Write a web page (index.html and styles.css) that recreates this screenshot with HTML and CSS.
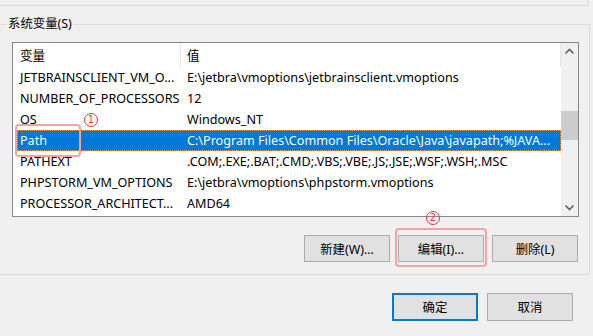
FILE: index.html
```html
<!DOCTYPE html>
<html lang="zh-CN">
<head>
    <meta charset="UTF-8">
    <title>系统变量</title>
    <link rel="stylesheet" href="styles.css">
</head>
<body>
    <div class="prev-group"></div>

    <fieldset class="group">
        <legend>系统变量(S)</legend>

        <div class="listview">
            <div class="list-main">
                <div class="list-header">
                    <div class="col-name">变量</div>
                    <div class="col-value">值</div>
                </div>
                <div class="row">
                    <div class="col-name">JETBRAINSCLIENT_VM_O...</div>
                    <div class="col-value">E:\jetbra\vmoptions\jetbrainsclient.vmoptions</div>
                </div>
                <div class="row">
                    <div class="col-name">NUMBER_OF_PROCESSORS</div>
                    <div class="col-value">12</div>
                </div>
                <div class="row">
                    <div class="col-name">OS</div>
                    <div class="col-value">Windows_NT</div>
                </div>
                <div class="row selected">
                    <div class="col-name">Path</div>
                    <div class="col-value">C:\Program Files\Common Files\Oracle\Java\javapath;%JAVA...</div>
                    <span class="mark mark-path"></span>
                    <span class="num num-one">1</span>
                </div>
                <div class="row">
                    <div class="col-name">PATHEXT</div>
                    <div class="col-value">.COM;.EXE;.BAT;.CMD;.VBS;.VBE;.JS;.JSE;.WSF;.WSH;.MSC</div>
                </div>
                <div class="row">
                    <div class="col-name">PHPSTORM_VM_OPTIONS</div>
                    <div class="col-value">E:\jetbra\vmoptions\phpstorm.vmoptions</div>
                </div>
                <div class="row">
                    <div class="col-name">PROCESSOR_ARCHITECT...</div>
                    <div class="col-value">AMD64</div>
                </div>
            </div>
            <div class="scrollbar">
                <svg class="arrow" width="17" height="17" viewBox="0 0 17 17">
                    <path d="M4.5 10.5 L8.5 6.5 L12.5 10.5" fill="none" stroke="#606060" stroke-width="1.6"/>
                </svg>
                <div class="track">
                    <div class="thumb"></div>
                </div>
                <svg class="arrow" width="17" height="17" viewBox="0 0 17 17">
                    <path d="M4.5 6.5 L8.5 10.5 L12.5 6.5" fill="none" stroke="#606060" stroke-width="1.6"/>
                </svg>
            </div>
        </div>

        <div class="group-buttons">
            <button class="btn">新建(W)...</button>
            <div class="btn-wrap">
                <button class="btn">编辑(I)...</button>
                <span class="mark mark-edit"></span>
                <span class="num num-two">2</span>
            </div>
            <button class="btn">删除(L)</button>
        </div>
    </fieldset>

    <div class="dialog-buttons">
        <button class="btn btn-default">确定</button>
        <button class="btn btn-cancel">取消</button>
    </div>
</body>
</html>
```

FILE: styles.css
```css
body {
    margin: 0;
    width: 593px;
    height: 336px;
    overflow: hidden;
    background: #f0f0f0;
    font-family: "Noto Sans", "Noto Sans CJK SC", sans-serif;
    font-size: 12px;
    color: #000;
}

.prev-group {
    height: 5px;
    width: 590px;
    margin-left: -2px;
    border-right: 1px solid #dcdcdc;
    border-bottom: 1px solid #dcdcdc;
}

.group {
    margin: 11px 0 0 -2px;
    width: 592px;
    height: 258px;
    box-sizing: border-box;
    border: 1px solid #dcdcdc;
    padding: 0;
    min-width: 0;
}

.group legend {
    margin-left: 8px;
    padding: 0 1px;
    line-height: 14px;
    font-size: 12.4px;
    color: #000;
}

/* list view */
.listview {
    margin: 11px 0 0 13px;
    width: 567px;
    height: 175px;
    box-sizing: border-box;
    border: 1px solid #828790;
    background: #fff;
    display: flex;
    font-size: 12.6px;
}

.list-main {
    flex: 1;
    position: relative;
}

.list-header {
    display: flex;
    height: 24px;
    align-items: center;
    border-right: 1px solid #e5e5e5;
}

.list-header .col-name {
    width: 168px;
    border-right: 1px solid #e5e5e5;
    height: 24px;
    line-height: 25px;
}

.list-header .col-value {
    padding-left: 6px;
    line-height: 25px;
}

.row {
    display: flex;
    height: 21px;
    line-height: 22px;
    margin-left: 4px;
    position: relative;
    white-space: nowrap;
}

.col-name {
    padding-left: 7px;
    box-sizing: border-box;
    flex-shrink: 0;
    overflow: hidden;
}

.row .col-name {
    width: 163px;
    padding-left: 3px;
}

.row .col-value {
    padding-left: 7px;
}

.selected {
    background: #0078d7;
    color: #fff;
    outline: 1px dotted #f0a050;
    outline-offset: -1px;
}

.scrollbar {
    width: 17px;
    background: #f0f0f0;
    display: flex;
    flex-direction: column;
}

.arrow {
    display: block;
}

.track {
    flex: 1;
    padding-top: 51px;
}

.thumb {
    height: 29px;
    background: #cdcdcd;
}

/* buttons */
.btn {
    font-family: "Noto Sans", "Noto Sans CJK SC", sans-serif;
    font-size: 12.4px;
    color: #000;
    background: #e1e1e1;
    border: 1px solid #adadad;
    width: 86px;
    height: 27px;
    padding: 0;
    margin: 0;
}

.group-buttons {
    display: flex;
    justify-content: flex-end;
    gap: 8px;
    margin: 18px 11px 0 0;
}

.btn-wrap {
    position: relative;
}

.dialog-buttons {
    display: flex;
    justify-content: flex-end;
    gap: 9px;
    margin: 18px 20px 0 0;
}

.btn-default {
    border: 2px solid #0078d7;
    height: 28px;
}

.btn-cancel {
    height: 28px;
}

/* annotations */
.mark {
    position: absolute;
    border: 2px solid #f4a3a3;
    border-radius: 4px;
}

.mark-path {
    left: -2px;
    top: -6px;
    width: 62px;
    height: 29px;
}

.mark-edit {
    left: -3px;
    top: -7px;
    width: 88px;
    height: 35px;
}

.num {
    position: absolute;
    width: 12px;
    height: 12px;
    border: 1px solid #e53935;
    border-radius: 50%;
    color: #e53935;
    font-family: "DejaVu Sans", sans-serif;
    font-size: 10px;
    line-height: 12px;
    text-align: center;
}

.num-one {
    left: 67px;
    top: -17px;
}

.num-two {
    left: 28px;
    top: -24px;
}
```
